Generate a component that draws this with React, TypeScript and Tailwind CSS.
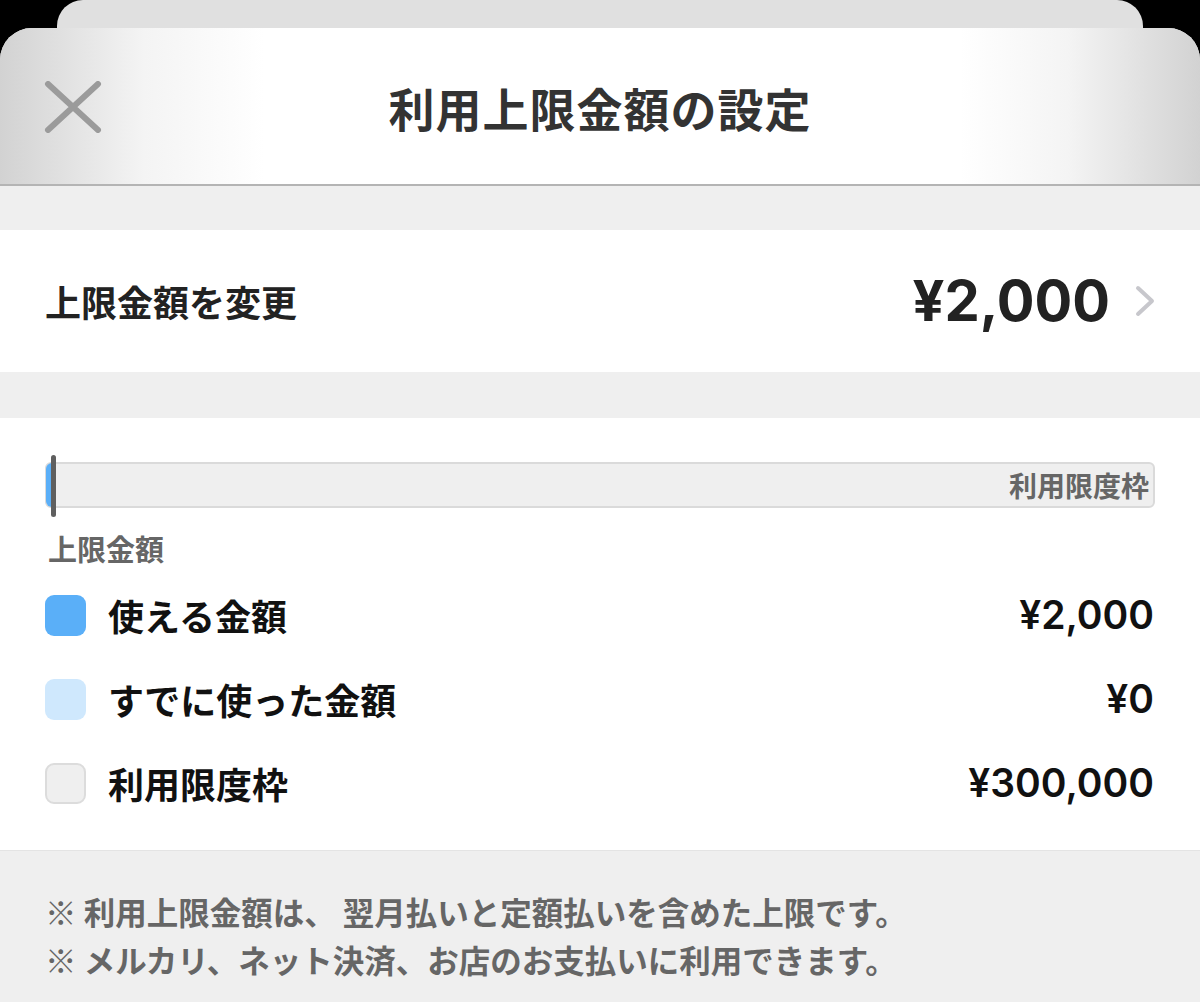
import React from 'react';

const jp = "font-['Noto_Sans_CJK_JP',sans-serif]";
const num = "font-['Inter','Noto_Sans_CJK_JP',sans-serif]";

interface LegendItem {
  label: string;
  value: string;
  swatch: string;
}

const legend: LegendItem[] = [
  { label: '使える金額', value: '¥2,000', swatch: 'bg-[#5aaff8]' },
  { label: 'すでに使った金額', value: '¥0', swatch: 'bg-[#cfe8fd]' },
  { label: '利用限度枠', value: '¥300,000', swatch: 'bg-[#efefef] border-2 border-[#dcdcdc]' },
];

export default function App() {
  const limit = 2000;
  const total = 300000;
  const percent = (limit / total) * 100;

  return (
    <div className={`w-[1200px] h-[1002px] overflow-hidden bg-black ${jp}`}>
      {/* card stacked behind */}
      <div className="mx-[57px] h-[28px] rounded-t-[26px] bg-[#e0e0e0]"></div>

      <div className="rounded-t-[32px] overflow-hidden bg-[#efefef]">
        {/* Header */}
        <div className="relative h-[158px] flex items-center justify-center border-b-2 border-[#b4b4b4] bg-[linear-gradient(to_right,#d2d2d2_0%,#f4f4f4_12%,#ffffff_22%,#ffffff_80%,#f4f4f4_89%,#d2d2d2_100%)]">
          <svg className="absolute left-[44px] top-[53px]" width="58" height="52" viewBox="0 0 58 52">
            <path d="M4 3 L54 49 M54 3 L4 49" stroke="#9b9b9b" strokeWidth="6" strokeLinecap="round" />
          </svg>
          <h1 className="text-[46px] font-bold text-[#333333] tracking-[1px] leading-none mt-[2px]">利用上限金額の設定</h1>
        </div>

        <div className="h-[44px]"></div>

        {/* Change limit row */}
        <div className="h-[142px] bg-white flex items-center justify-between pl-[45px] pr-[44px]">
          <span className="text-[36px] font-semibold text-[#222222]">上限金額を変更</span>
          <div className="flex items-center gap-[24px]">
            <span className={`${num} text-[56px] font-bold text-[#222222] leading-none`}>¥2,000</span>
            <svg width="22" height="32" viewBox="0 0 22 32">
              <path d="M4 3 L18 16 L4 29" stroke="#c7c7cc" strokeWidth="4" fill="none" strokeLinecap="round" strokeLinejoin="round" />
            </svg>
          </div>
        </div>

        <div className="h-[46px]"></div>

        {/* Usage bar + legend */}
        <div className="bg-white px-[45px] pt-[44px] pb-[25px]">
          <div className="relative h-[46px] rounded-[6px] bg-[#efefef] border-2 border-[#dadada] flex items-center justify-end pr-[4px]">
            <div
              className="absolute left-[-1px] top-[-1px] bottom-[-1px] rounded-l-[6px] bg-[#5aaff8] min-w-[8px]"
              style={{ width: `${percent}%` }}
            ></div>
            <div className="absolute left-[4px] top-[-9px] w-[5px] h-[62px] rounded-full bg-[#5f5f5f]"></div>
            <span className="text-[28px] font-bold text-[#666666] leading-none">利用限度枠</span>
          </div>

          <div className="mt-[26px] pl-[3px] text-[29px] font-bold text-[#666666] leading-none">上限金額</div>

          <div className="mt-[10px] flex flex-col">
            {legend.map((item) => (
              <div key={item.label} className="h-[84px] flex items-center justify-between">
                <div className="flex items-center gap-[22px]">
                  <div className={`w-[41px] h-[41px] rounded-[9px] ${item.swatch}`}></div>
                  <span className="text-[36px] font-semibold text-[#111111]">{item.label}</span>
                </div>
                <span className={`${num} text-[39px] font-semibold text-[#111111] pr-[1px]`}>{item.value}</span>
              </div>
            ))}
          </div>
        </div>

        {/* Notes */}
        <div className="border-t border-[#e4e4e4] px-[45px] pt-[36px] pb-[30px] text-[31.5px] font-semibold text-[#666666] leading-[48px] whitespace-nowrap">
          <p>※ 利用上限金額は、 翌月払いと定額払いを含めた上限です。</p>
          <p>※ メルカリ、ネット決済、お店のお支払いに利用できます。</p>
        </div>
      </div>
    </div>
  );
}
